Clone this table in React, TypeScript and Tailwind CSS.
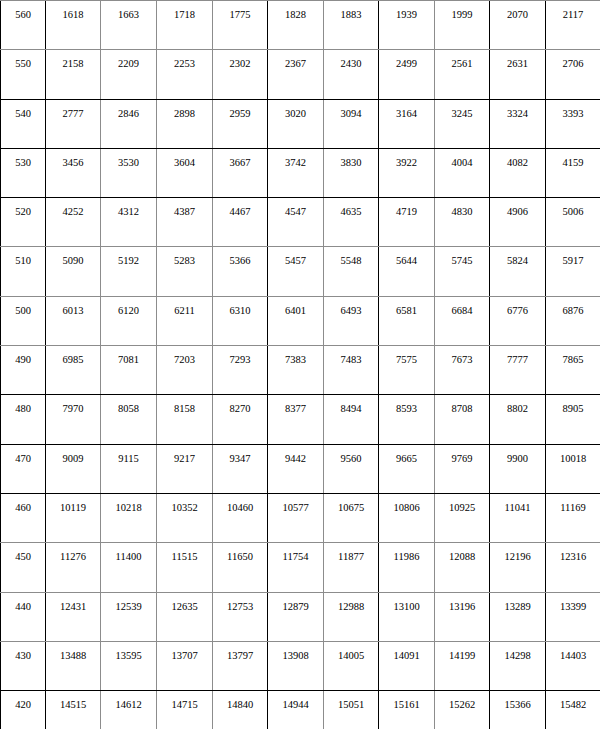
import React from "react";

const rows: [string, string[]][] = [
  ["560", ["1618", "1663", "1718", "1775", "1828", "1883", "1939", "1999", "2070", "2117"]],
  ["550", ["2158", "2209", "2253", "2302", "2367", "2430", "2499", "2561", "2631", "2706"]],
  ["540", ["2777", "2846", "2898", "2959", "3020", "3094", "3164", "3245", "3324", "3393"]],
  ["530", ["3456", "3530", "3604", "3667", "3742", "3830", "3922", "4004", "4082", "4159"]],
  ["520", ["4252", "4312", "4387", "4467", "4547", "4635", "4719", "4830", "4906", "5006"]],
  ["510", ["5090", "5192", "5283", "5366", "5457", "5548", "5644", "5745", "5824", "5917"]],
  ["500", ["6013", "6120", "6211", "6310", "6401", "6493", "6581", "6684", "6776", "6876"]],
  ["490", ["6985", "7081", "7203", "7293", "7383", "7483", "7575", "7673", "7777", "7865"]],
  ["480", ["7970", "8058", "8158", "8270", "8377", "8494", "8593", "8708", "8802", "8905"]],
  ["470", ["9009", "9115", "9217", "9347", "9442", "9560", "9665", "9769", "9900", "10018"]],
  ["460", ["10119", "10218", "10352", "10460", "10577", "10675", "10806", "10925", "11041", "11169"]],
  ["450", ["11276", "11400", "11515", "11650", "11754", "11877", "11986", "12088", "12196", "12316"]],
  ["440", ["12431", "12539", "12635", "12753", "12879", "12988", "13100", "13196", "13289", "13399"]],
  ["430", ["13488", "13595", "13707", "13797", "13908", "14005", "14091", "14199", "14298", "14403"]],
  ["420", ["14515", "14612", "14715", "14840", "14944", "15051", "15161", "15262", "15366", "15482"]],
];

// horizontal line colours (top border of each row)
const rowBorder = [
  "border-t-[#8c8c8c]",
  "border-t-[#8c8c8c]",
  "border-t-black",
  "border-t-black",
  "border-t-black",
  "border-t-[#8c8c8c]",
  "border-t-[#8c8c8c]",
  "border-t-[#8c8c8c]",
  "border-t-black",
  "border-t-black",
  "border-t-black",
  "border-t-[#8c8c8c]",
  "border-t-[#8c8c8c]",
  "border-t-[#8c8c8c]",
  "border-t-black",
];

// column widths (including left border) and left-line colours
const cols = [
  "w-[45px] border-l-black",
  "w-[55px] border-l-black",
  "w-[56px] border-l-[#8c8c8c]",
  "w-[56px] border-l-[#8c8c8c]",
  "w-[55px] border-l-[#8c8c8c]",
  "w-[56px] border-l-black",
  "w-[55px] border-l-[#8c8c8c]",
  "w-[56px] border-l-black",
  "w-[55px] border-l-[#8c8c8c]",
  "w-[56px] border-l-black",
  "w-[55px] border-l-black",
];

export default function App() {
  return (
    <div className="w-[600px] h-[729px] overflow-hidden bg-white text-black font-['Liberation_Serif',serif] text-[10.5px] leading-[12px]">
      {rows.map(([label, vals], r) => (
        <div key={label} className={`flex h-[49.3px] border-t ${rowBorder[r]}`}>
          {[label, ...vals].map((v, c) => (
            <div
              key={c}
              className={`shrink-0 border-l text-center pt-[8px] ${cols[c]}`}
            >
              {v}
            </div>
          ))}
        </div>
      ))}
    </div>
  );
}
